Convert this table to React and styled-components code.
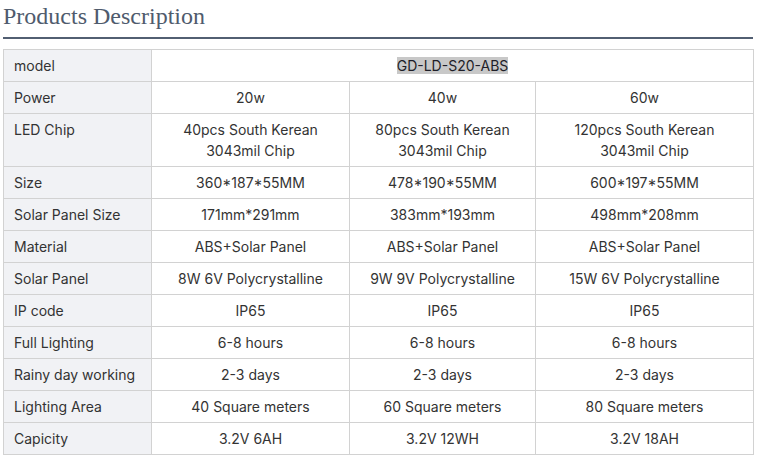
import React from 'react';
import styled, { createGlobalStyle } from 'styled-components';

const GlobalStyle = createGlobalStyle`
    body {
        margin: 0;
        background: #fff;
        font-family: Inter, "Liberation Sans", sans-serif;
    }
`;

const Page = styled.div`
    width: 750px;
    padding: 0 6px 0 3px;
`;

const Title = styled.h2`
    margin: 0;
    padding-top: 1px;
    font-family: "Liberation Serif", "Times New Roman", serif;
    font-weight: normal;
    font-size: 24px;
    line-height: 30px;
    color: #4f5b6d;
    border-bottom: 2px solid #525f72;
    padding-bottom: 6px;
    margin-bottom: 10px;
`;

const Table = styled.table`
    width: 750px;
    border-collapse: collapse;
    table-layout: fixed;
    font-size: 14px;
    color: #333;
`;

const Cell = styled.td`
    border: 1px solid #d2d2d2;
    padding: 5px 10px 5px ${(p) => (p.head ? '10px' : '10px')};
    line-height: 21px;
    vertical-align: top;
    text-align: ${(p) => (p.head ? 'left' : 'center')};
    background: ${(p) => (p.head ? '#f1f2f5' : '#fff')};
`;

const Highlight = styled.span`
    background: #c8c8c8;
    color: #1e1e28;
`;

const rows = [
    ['Power', '20w', '40w', '60w'],
    ['LED Chip', ['40pcs South Kerean', '3043mil Chip'], ['80pcs South Kerean', '3043mil Chip'], ['120pcs South Kerean', '3043mil Chip']],
    ['Size', '360*187*55MM', '478*190*55MM', '600*197*55MM'],
    ['Solar Panel Size', '171mm*291mm', '383mm*193mm', '498mm*208mm'],
    ['Material', 'ABS+Solar Panel', 'ABS+Solar Panel', 'ABS+Solar Panel'],
    ['Solar Panel', '8W 6V Polycrystalline', '9W 9V Polycrystalline', '15W 6V Polycrystalline'],
    ['IP code', 'IP65', 'IP65', 'IP65'],
    ['Full Lighting', '6-8 hours', '6-8 hours', '6-8 hours'],
    ['Rainy day working', '2-3 days', '2-3 days', '2-3 days'],
    ['Lighting Area', '40 Square meters', '60 Square meters', '80 Square meters'],
    ['Capicity', '3.2V 6AH', '3.2V 12WH', '3.2V 18AH'],
];

function renderValue(v) {
    if (Array.isArray(v)) {
        return v.map((line, i) => (
            <React.Fragment key={i}>
                {i > 0 && <br />}
                {line}
            </React.Fragment>
        ));
    }
    return v;
}

export default function App() {
    return (
        <Page>
            <GlobalStyle />
            <Title>Products Description</Title>
            <Table>
                <colgroup>
                    <col style={{ width: 148 }} />
                    <col style={{ width: 198 }} />
                    <col style={{ width: 186 }} />
                    <col style={{ width: 218 }} />
                </colgroup>
                <tbody>
                    <tr>
                        <Cell head>model</Cell>
                        <Cell colSpan={3}><Highlight>GD-LD-S20-ABS</Highlight></Cell>
                    </tr>
                    {rows.map((r) => (
                        <tr key={r[0]}>
                            <Cell head>{r[0]}</Cell>
                            {r.slice(1).map((v, i) => (
                                <Cell key={i}>{renderValue(v)}</Cell>
                            ))}
                        </tr>
                    ))}
                </tbody>
            </Table>
        </Page>
    );
}
